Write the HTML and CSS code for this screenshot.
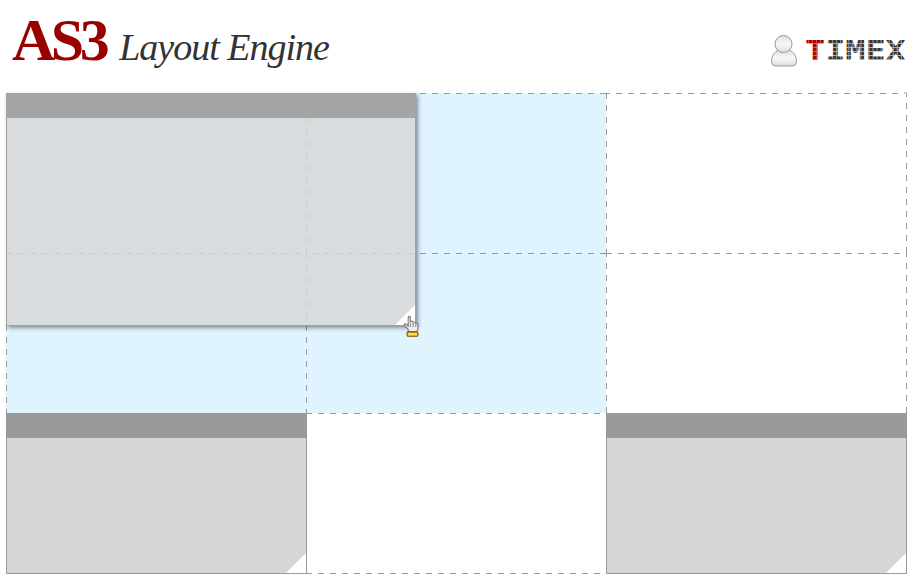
FILE: index.html
```html
<!DOCTYPE html>
<html lang="en">
<head>
<meta charset="utf-8">
<title>AS3 Layout Engine</title>
<link rel="stylesheet" href="styles.css">
</head>
<body>
<header class="header">
  <h1 class="title"><span class="as3">AS3</span><span class="engine">Layout Engine</span></h1>
  <div class="account">
    <svg class="user" viewBox="0 0 28 34" width="28" height="34">
      <defs><linearGradient id="skin" x2="0" y2="1"><stop stop-color="#ddd"/><stop offset=".5" stop-color="#f8f8f8"/><stop offset="1" stop-color="#ddd"/></linearGradient></defs>
      <path d="M9 16C4 18 1.500 22 1.500 28Q2 32 6 32H22Q26 32 26.500 28C26.500 22 24 18 19 16Z" fill="url(#skin)" stroke="#999"/>
      <circle cx="13.500" cy="10" r="8.500" fill="url(#skin)" stroke="#999"/>
    </svg>
    <svg class="brand" viewBox="0 0 100 24" width="100" height="24">
      <defs>
        <pattern id="reddots" width="3.250" height="4" patternUnits="userSpaceOnUse"><rect width="4" height="4" fill="#d55"/><rect width="2.450" height="3" fill="#a00"/></pattern>
        <pattern id="graydots" width="3.250" height="4" patternUnits="userSpaceOnUse"><rect width="4" height="4" fill="#aaa"/><rect width="2.450" height="3" fill="#333"/></pattern>
      </defs>
      <g class="brand-text" transform="translate(-2 22) scale(1.240 1)"><text><tspan fill="url(#reddots)">T</tspan><tspan fill="url(#graydots)">IMEX</tspan></text></g>
    </svg>
  </div>
</header>
<main class="board">
  <div class="cell drop"></div><div class="cell drop"></div><div class="cell"></div>
  <div class="cell drop"></div><div class="cell drop"></div><div class="cell"></div>
  <section class="panel"><div class="bar"></div><i class="corner"></i></section>
  <div class="cell"></div>
  <section class="panel"><div class="bar"></div><i class="corner"></i></section>
  <svg class="lines" width="901" height="481" viewBox="0 0 901 481">
    <g fill="none" stroke="#999" stroke-dasharray="6 6">
      <path d="M0 .5H300M300.500 0V160M0 160.500H300M.5 0V160"/>
      <path d="M600 160.500H900M600 320.500H901M300 320.500H600M300 480.500H600"/>
      <path d="M600.500 0V160M300.500 160V320M.5 160V320"/>
      <path stroke-dashoffset="2" d="M600 .5H900M600.500 160V320M900.500 0V160M900.500 160V320"/>
      <path stroke-dashoffset="6" d="M300 .5H600M300 160.500H600"/>
    </g>
    <path d="M898 0H901" stroke="#ccc" stroke-width="2"/>
  </svg>
  <section class="panel dragged"><div class="bar"></div><i class="corner"></i></section>
  <svg class="cursor" width="20" height="24" viewBox="0 0 18 22">
    <path d="M5.500 15.500V13L2 9.500Q1.500 7.500 4 8.500L5.500 10V2Q6.500 .5 7.500 2V6Q9 5 10 6.500Q11.500 6 12 7.500Q14.500 7 14.500 9V13L13 15.500Z" fill="#eee" stroke="#777"/>
    <path d="M7.500 7V11M10 7V11M12.500 8V11" stroke="#888"/>
    <rect x="4.500" y="15.500" width="10" height="4" rx="1" fill="#fc3" stroke="#8a4a00"/>
    <path d="M6 17.500H13" stroke="#ffec72"/>
  </svg>
</main>
</body>
</html>
```

FILE: styles.css
```css
* { box-sizing: border-box; }
body { margin: 0; width: 918px; height: 582px; overflow: hidden; background: #fff; font-family: "Liberation Serif", serif; }
.header { height: 93px; padding: 0 11px 0 12px; display: flex; justify-content: space-between; }
.title { margin: 0; padding-top: 8px; display: flex; align-items: baseline; font-weight: normal; line-height: 64px; }
.as3 { color: #900; font-weight: bold; font-size: 60px; letter-spacing: -4.5px; }
.engine { margin-left: 14px; color: #333; font-style: italic; font-size: 38px; letter-spacing: -1px; }
.account { display: flex; padding-top: 34px; }
.brand { margin: 4px 0 0 9px; overflow: visible; }
.brand-text { font: bold 27px "DejaVu Sans Mono", monospace; }
.board { position: relative; margin-left: 6px; width: 901px; height: 481px; display: grid; grid-template: 160px 160px 161px / 300px 300px 301px; }
.drop { background: #e0f4ff; }
.panel { position: relative; background: #d6d6d6; border: 1px solid #999; }
.panel:nth-of-type(1) { width: 301px; }
.bar { height: 24px; background: #999; }
.corner { position: absolute; right: 0; bottom: 0; width: 20px; height: 20px; background: #fff; clip-path: polygon(100% 0, 100% 100%, 0 100%); }
.lines { position: absolute; left: 0; top: 0; overflow: visible; }
.dragged.dragged { position: absolute; left: 0; top: 0; width: 410px; height: 233px; background: rgba(214, 214, 214, .8); border-color: #a0a3a2; box-shadow: 2px 2px 4px rgba(0, 0, 0, .42); }
.dragged .bar { background: #a4a6a5; }
.cursor { position: absolute; left: 396px; top: 222px; }
```
